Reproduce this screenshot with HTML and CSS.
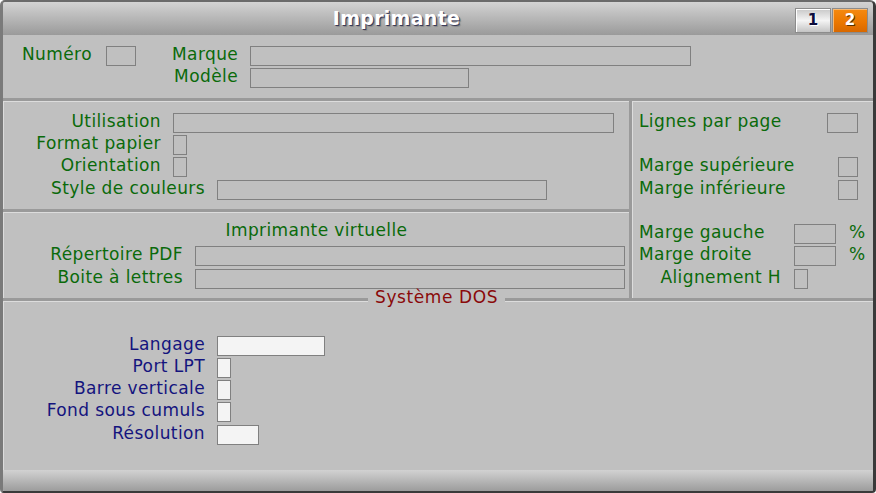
FILE: index.html
```html
<!DOCTYPE html>
<html lang="fr">

<head>
  <meta charset="UTF-8">
  <title>Imprimante</title>
  <link rel="stylesheet" href="styles.css">
</head>

<body>
  <div class="window">
    <div class="titlebar">
      <div class="title">Imprimante</div>
      <div class="tabs">
        <span class="tab">1</span>
        <span class="tab active">2</span>
      </div>
    </div>

    <div class="body">
      <!-- identification -->
      <div class="top">
        <div class="row">
          <span class="lbl numLbl">Numéro</span>
          <span class="inp w30"></span>
        </div>
        <div class="stack">
          <div class="row">
            <span class="lbl r brandLbl">Marque</span>
            <span class="inp w441"></span>
          </div>
          <div class="row">
            <span class="lbl r brandLbl">Modèle</span>
            <span class="inp w219"></span>
          </div>
        </div>
      </div>

      <div class="middle">
        <div class="leftCol">
          <div class="panel usage">
            <div class="row">
              <span class="lbl r">Utilisation</span>
              <span class="inp w441"></span>
            </div>
            <div class="row">
              <span class="lbl r">Format papier</span>
              <span class="inp w14"></span>
            </div>
            <div class="row">
              <span class="lbl r">Orientation</span>
              <span class="inp w14"></span>
            </div>
            <div class="row styleRow">
              <span class="lbl r">Style de couleurs</span>
              <span class="inp w330"></span>
            </div>
          </div>

          <div class="panel virtual">
            <div class="lbl vTitle">Imprimante virtuelle</div>
            <div class="row">
              <span class="lbl r">Répertoire PDF</span>
              <span class="inp w430"></span>
            </div>
            <div class="row">
              <span class="lbl r">Boite à lettres</span>
              <span class="inp w430"></span>
            </div>
          </div>
        </div>

        <div class="panel margins">
          <div class="row mLignes">
            <span class="lbl grow">Lignes par page</span>
            <span class="inp w31"></span>
          </div>
          <div class="row mSup">
            <span class="lbl grow">Marge supérieure</span>
            <span class="inp w20"></span>
          </div>
          <div class="row mInf">
            <span class="lbl grow">Marge inférieure</span>
            <span class="inp w20"></span>
          </div>
          <div class="row mGauche">
            <span class="lbl grow">Marge gauche</span>
            <span class="inp w42"></span>
            <span class="lbl pct">%</span>
          </div>
          <div class="row mDroite">
            <span class="lbl grow">Marge droite</span>
            <span class="inp w42"></span>
            <span class="lbl pct">%</span>
          </div>
          <div class="row mAlign">
            <span class="lbl grow r">Alignement H</span>
            <span class="inp w14"></span>
          </div>
        </div>
      </div>

      <div class="panel dos">
        <span class="legend">Système DOS</span>
        <div class="row">
          <span class="lbl r">Langage</span>
          <span class="inp w108"></span>
        </div>
        <div class="row">
          <span class="lbl r">Port LPT</span>
          <span class="inp w14"></span>
        </div>
        <div class="row">
          <span class="lbl r">Barre verticale</span>
          <span class="inp w14"></span>
        </div>
        <div class="row">
          <span class="lbl r">Fond sous cumuls</span>
          <span class="inp w14"></span>
        </div>
        <div class="row resRow">
          <span class="lbl r">Résolution</span>
          <span class="inp w42"></span>
        </div>
      </div>
    </div>

    <div class="statusbar"></div>
  </div>
</body>

</html>
```

FILE: styles.css
```css
body {
  margin: 0;
  font-family: "DejaVu Sans", Verdana, sans-serif;
}

.window {
  width: 876px;
  height: 493px;
  box-sizing: border-box;
  border-style: solid;
  border-width: 2px 3px 2px 3px;
  border-color: #6a6a6a #3a3a3a #3a3a3a #7a7a7a;
  border-radius: 5px 6px 4px 4px;
  background: #c0c0c0;
  display: flex;
  flex-direction: column;
  overflow: hidden;
}

.titlebar {
  height: 33px;
  flex: none;
  display: flex;
  background: linear-gradient(#d3d3d3, #9a9a9a);
}

.title {
  flex: 1;
  padding-right: 5px;
  text-align: center;
  font-size: 19px;
  font-weight: bold;
  letter-spacing: 0.3px;
  line-height: 33px;
  color: #fff;
  text-shadow: 1px 1px 0 #3a3a58, 2px 2px 1px #8a8a8a;
}

.tabs {
  display: flex;
  gap: 1px;
  height: 25px;
  margin: 6px 5px 0 0;
}

.tab {
  width: 36px;
  height: 25px;
  box-sizing: border-box;
  border: 1px solid #8c8c8c;
  box-shadow: inset 1px 1px 0 #fff;
  background: linear-gradient(#c8c8c8, #f4f4f4 50%, #c4c4c4);
  text-align: center;
  font-size: 15px;
  font-weight: bold;
  line-height: 23px;
  color: #0c0c3c;
  text-shadow: 1px 1px 0 #fff;
}

.tab.active {
  background: linear-gradient(#f58a10, #ea7600 60%, #d86800);
  box-shadow: inset 1px 1px 0 #f8b870;
  color: #fff;
  text-shadow: 1px 1px 0 #5a3000;
}

.body {
  flex: 1;
  display: flex;
  flex-direction: column;
  gap: 3px;
  background: #9a9a9a;
}

/* champs et libellés */
.row {
  display: flex;
  gap: 12px;
  height: 20px;
}

.lbl {
  font-size: 17px;
  letter-spacing: 0.4px;
  line-height: 16px;
  color: #0a6a0a;
  white-space: nowrap;
}

.lbl.r {
  text-align: right;
}

.inp {
  display: block;
  flex: none;
  height: 20px;
  box-sizing: border-box;
  border: 1px solid #808080;
}

.w14 { width: 14px; }
.w20 { width: 20px; }
.w30 { width: 30px; }
.w31 { width: 31px; }
.w42 { width: 42px; }
.w108 { width: 108px; }
.w219 { width: 219px; }
.w330 { width: 330px; }
.w430 { width: 430px; }
.w441 { width: 441px; }

.panel {
  background: #c0c0c0;
  border-top: 1px solid #dcdcdc;
  border-left: 1px solid #dcdcdc;
  box-sizing: border-box;
}

/* en-tete */
.top {
  height: 63px;
  flex: none;
  box-sizing: border-box;
  display: flex;
  padding: 11px 0 0 19px;
  background: #c0c0c0;
}

.numLbl {
  width: 72px;
}

.stack {
  display: flex;
  flex-direction: column;
  gap: 2px;
  margin-left: 36px;
}

.brandLbl {
  width: 66px;
}

.middle {
  height: 197px;
  flex: none;
  display: flex;
  gap: 3px;
}

.leftCol {
  width: 626px;
  display: flex;
  flex-direction: column;
  gap: 3px;
}

.usage {
  height: 108px;
  display: flex;
  flex-direction: column;
  gap: 2px;
  padding-top: 11px;
}

.usage .lbl {
  width: 157px;
}

.usage .styleRow {
  margin-top: 1px;
}

.usage .styleRow .lbl {
  width: 201px;
}

.virtual {
  flex: 1;
  display: flex;
  flex-direction: column;
  gap: 3px;
  padding-top: 9px;
}

.virtual .vTitle {
  text-align: center;
  margin-bottom: 5px;
}

.virtual .row .lbl {
  width: 179px;
}

/* marges */
.margins {
  flex: 1;
  padding: 11px 0 0 6px;
}

.margins .grow {
  flex: 1;
}

.margins .row {
  gap: 0;
}

.mLignes .inp,
.mSup .inp,
.mInf .inp {
  margin-right: 15px;
}

.mSup,
.mGauche {
  margin-top: 24px;
}

.mInf,
.mAlign {
  margin-top: 3px;
}

.mDroite {
  margin-top: 2px;
}

.pct {
  width: 17px;
  margin: 0 7px 0 13px;
  letter-spacing: 0;
}

.mAlign .grow {
  padding-right: 13px;
}

.mAlign .inp {
  margin-right: 65px;
}

/* systeme DOS */
.dos {
  position: relative;
  flex: 1;
  display: flex;
  flex-direction: column;
  gap: 2px;
  padding-top: 34px;
}

.dos .lbl {
  width: 201px;
  color: #14147e;
}

.dos .inp {
  background: #f4f4f4;
}

.dos .resRow {
  margin-top: 1px;
}

.dos .legend {
  position: absolute;
  top: -13px;
  left: 364px;
  width: auto;
  height: 18px;
  padding: 0 7px;
  background: #c0c0c0;
  font-size: 17px;
  letter-spacing: 0.6px;
  line-height: 16px;
  color: #8a0a0a;
}

.statusbar {
  height: 21px;
  flex: none;
  background: linear-gradient(#d2d2d2, #9c9c9c);
}
```
